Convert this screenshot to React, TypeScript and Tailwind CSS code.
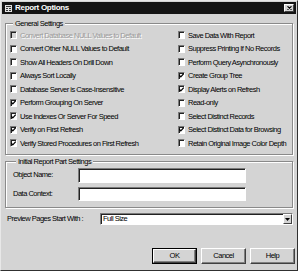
const left = [
  { label: "Convert Database NULL Values to Default", checked: false, disabled: true },
  { label: "Convert Other NULL Values to Default", checked: false },
  { label: "Show All Headers On Drill Down", checked: false },
  { label: "Always Sort Locally", checked: false },
  { label: "Database Server is Case-Insensitive", checked: false },
  { label: "Perform Grouping On Server", checked: true },
  { label: "Use Indexes Or Server For Speed", checked: true },
  { label: "Verify on First Refresh", checked: true },
  { label: "Verify Stored Procedures on First Refresh", checked: true },
];

const right = [
  { label: "Save Data With Report", checked: false },
  { label: "Suppress Printing If No Records", checked: false },
  { label: "Perform Query Asynchronously", checked: false },
  { label: "Create Group Tree", checked: true },
  { label: "Display Alerts on Refresh", checked: true },
  { label: "Read-only", checked: false },
  { label: "Select Distinct Records", checked: false },
  { label: "Select Distinct Data for Browsing", checked: true },
  { label: "Retain Original Image Color Depth", checked: false },
];

type Opt = { label: string; checked: boolean; disabled?: boolean };

const CheckRow = ({ opt }: { opt: Opt }) => (
  <div className="flex items-center h-[13.5px] gap-[3px]">
    <div
      className={`w-[7px] h-[8px] shrink-0 border-t border-l border-[#7a7a7a] border-r border-b border-r-white border-b-white shadow-[inset_1px_1px_0_#222] flex items-center justify-center ${
        opt.disabled ? "bg-[#d4d4d4]" : "bg-white"
      }`}
    >
      {opt.checked && (
        <svg width="5" height="5" viewBox="0 0 5 5">
          <path d="M0.3 2.2 L1.8 3.8 L4.7 0.6" stroke="#000" strokeWidth="1.2" fill="none" />
        </svg>
      )}
    </div>
    <span
      className={`whitespace-nowrap ${
        opt.disabled ? "text-[#9a9a9a] [text-shadow:1px_1px_0_#fff]" : "text-black"
      }`}
    >
      {opt.label}
    </span>
  </div>
);

const Sunken = ({ className }: { className: string }) => (
  <div
    className={`bg-white border-t border-l border-[#7a7a7a] border-r border-b border-r-white border-b-white shadow-[inset_1px_1px_0_#222] ${className}`}
  />
);

const Btn = ({ label, primary }: { label: string; primary?: boolean }) => (
  <div className={`h-[16px] ${primary ? "border border-black" : ""} w-[45px]`}>
    <div className="h-full w-full bg-[#d4d4d4] border-t border-l border-white border-r border-b border-r-[#404040] border-b-[#404040] shadow-[inset_-1px_-1px_0_#808080] flex items-center justify-center">
      {label}
    </div>
  </div>
);

export default function App() {
  return (
    <div
      className="w-[298px] h-[271px] bg-[#d4d4d4] border-l border-t border-[#e8e8e8] border-r border-b border-r-[#303030] border-b-[#303030] flex flex-col text-[7.5px] tracking-[-0.5px] leading-none overflow-hidden"
      style={{ fontFamily: '"Liberation Sans", Arial, sans-serif' }}
    >
      <div className="h-[12px] mx-[1px] mt-[1px] bg-[#141414] flex items-center pl-[3px] pr-[2px]">
        <svg width="7" height="7" viewBox="0 0 7 7" className="shrink-0">
          <rect x="0" y="0" width="7" height="7" fill="#e0e0e0" />
          <rect x="1" y="1" width="5" height="1" fill="#333" />
          <rect x="1" y="3" width="2" height="1" fill="#333" />
          <rect x="4" y="3" width="2" height="1" fill="#333" />
          <rect x="1" y="5" width="2" height="1" fill="#333" />
          <rect x="4" y="5" width="2" height="1" fill="#333" />
        </svg>
        <span className="ml-[3px] text-white font-bold text-[8px] tracking-[-0.3px]">Report Options</span>
        <div className="ml-auto w-[10px] h-[8px] bg-[#d4d4d4] border-t border-l border-white border-r border-b border-r-[#404040] border-b-[#404040] flex items-center justify-center">
          <svg width="5" height="4" viewBox="0 0 5 4">
            <path d="M0.5 0.3 L4.5 3.7 M4.5 0.3 L0.5 3.7" stroke="#000" strokeWidth="1.1" />
          </svg>
        </div>
      </div>

      <fieldset className="mx-[4px] mt-[6px] h-[135px] border border-[#8a8a8a] shadow-[inset_1px_1px_0_#fff,1px_1px_0_#fff] px-[4px] pt-[1px]">
        <legend className="ml-[3px] px-[2px] bg-[#d4d4d4] text-black">General Settings</legend>
        <div className="flex">
          <div className="w-[168px] flex flex-col">
            {left.map((o) => (
              <CheckRow key={o.label} opt={o} />
            ))}
          </div>
          <div className="flex flex-col">
            {right.map((o) => (
              <CheckRow key={o.label} opt={o} />
            ))}
          </div>
        </div>
      </fieldset>

      <fieldset className="mx-[4px] mt-[3px] h-[50px] border border-[#8a8a8a] shadow-[inset_1px_1px_0_#fff,1px_1px_0_#fff] pl-[7px] pt-[2px]">
        <legend className="ml-[3px] px-[2px] bg-[#d4d4d4] text-black">Initial Report Part Settings</legend>
        <div className="flex items-center h-[15px]">
          <span className="w-[65px]">Object Name:</span>
          <Sunken className="w-[168px] h-[15px]" />
        </div>
        <div className="flex items-center h-[14px] mt-[4px]">
          <span className="w-[65px]">Data Context:</span>
          <Sunken className="w-[168px] h-[14px]" />
        </div>
      </fieldset>

      <div className="flex items-center mt-[5px] pl-[6px] pr-[4px]">
        <span className="w-[93px]">Preview Pages Start With :</span>
        <div className="flex-1 h-[12px] bg-white border-t border-l border-[#7a7a7a] border-r border-b border-r-white border-b-white shadow-[inset_1px_1px_0_#222] flex items-center pl-[2px]">
          <span>Full Size</span>
          <div className="ml-auto w-[9px] h-full bg-[#d4d4d4] border-t border-l border-white border-r border-b border-r-[#404040] border-b-[#404040] flex items-center justify-center">
            <svg width="5" height="3" viewBox="0 0 5 3">
              <path d="M0 0 L5 0 L2.5 3 Z" fill="#000" />
            </svg>
          </div>
        </div>
      </div>

      <div className="flex justify-end gap-[4px] pr-[2px] mt-[23px]">
        <Btn label="OK" primary />
        <Btn label="Cancel" />
        <Btn label="Help" />
      </div>
    </div>
  );
}
